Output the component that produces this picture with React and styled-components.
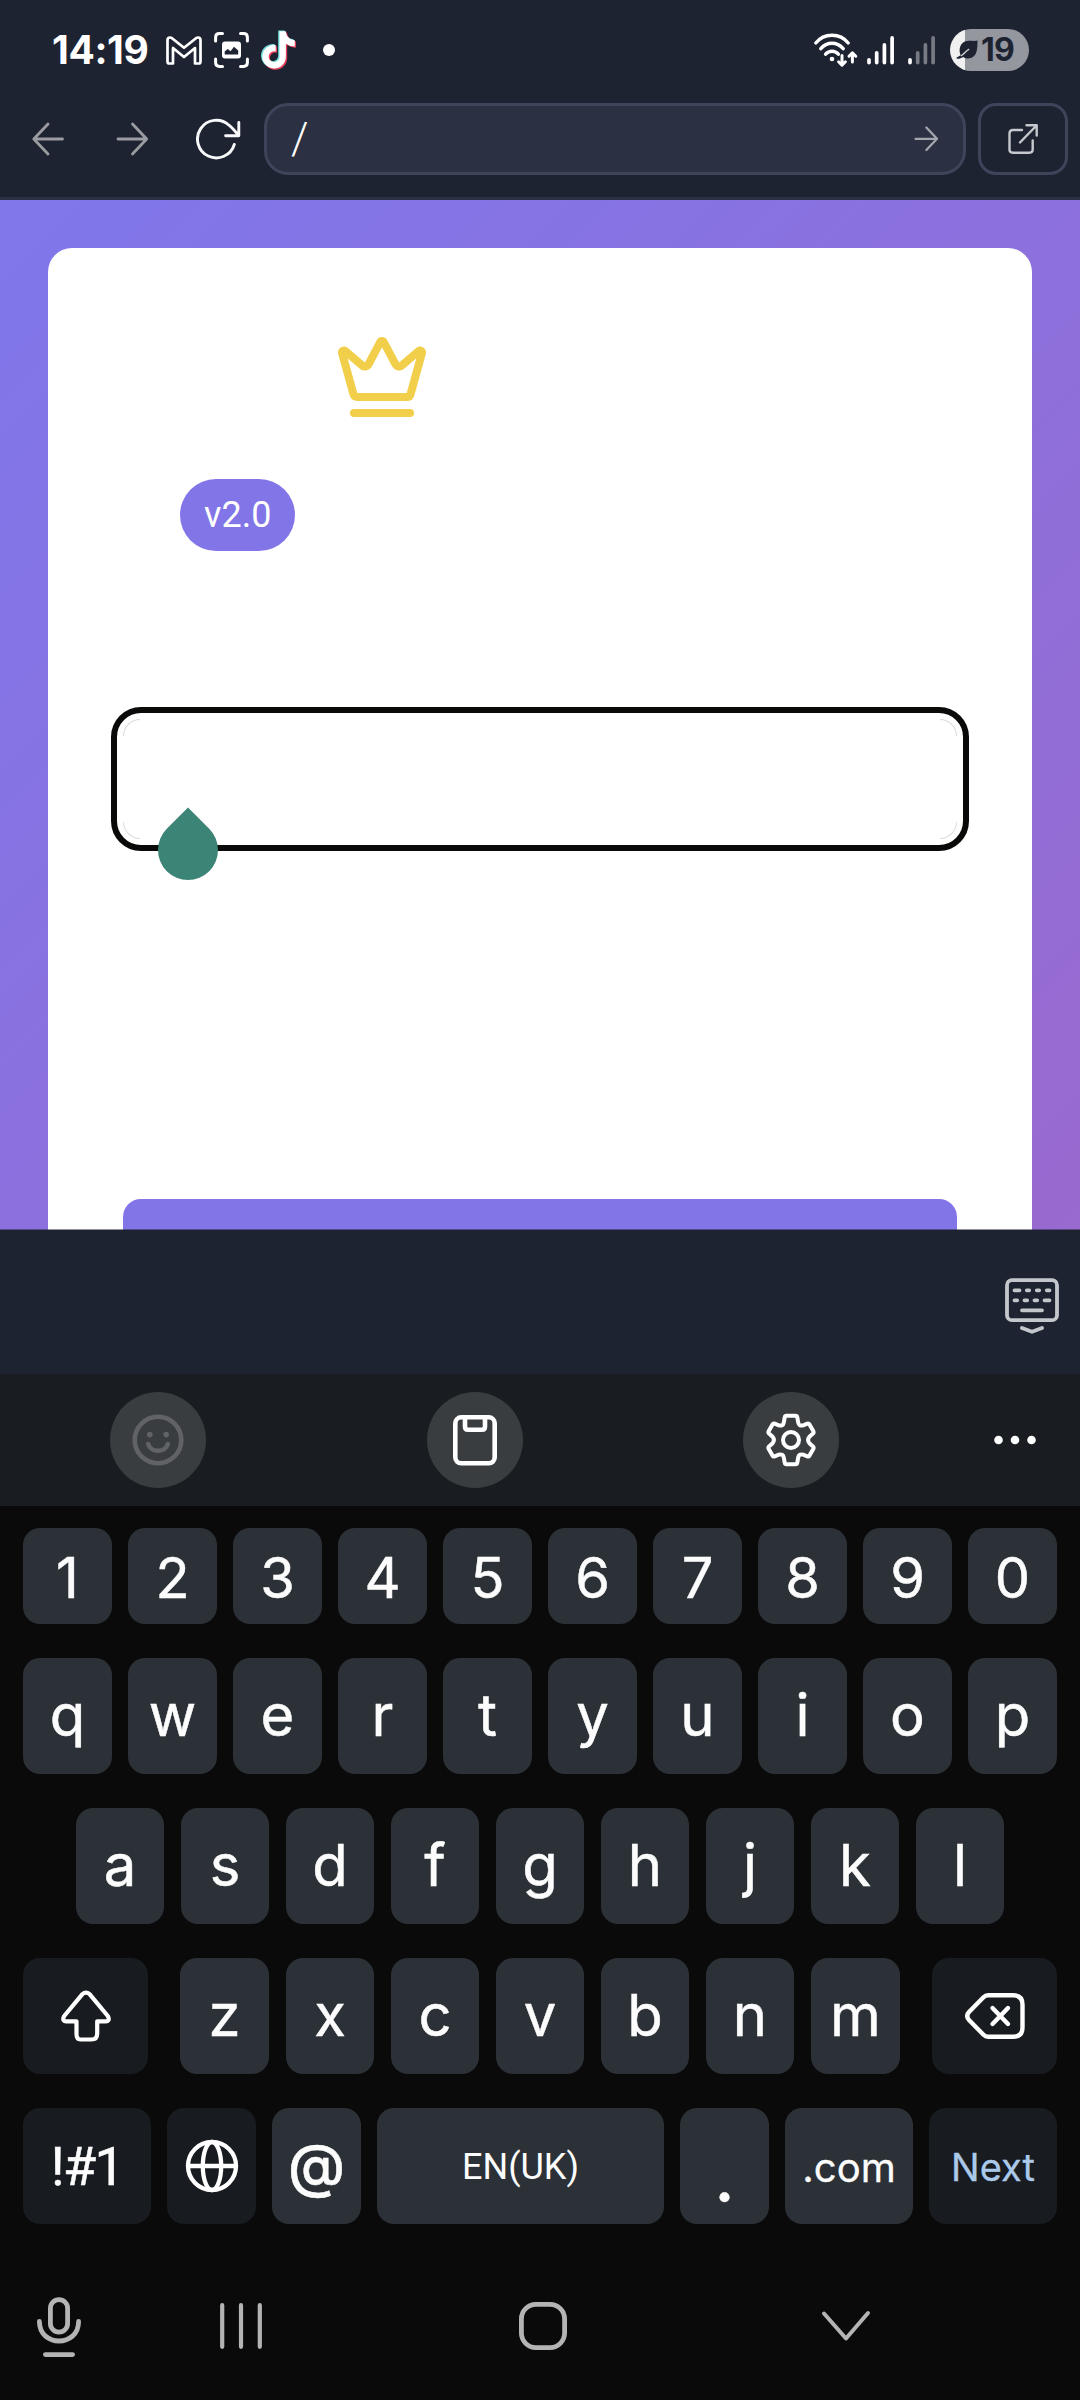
import React from "react";
import styled, { createGlobalStyle, css } from "styled-components";

const Global = createGlobalStyle`
  *, *::before, *::after { box-sizing: border-box; }
  body { margin: 0; background: #0a0a0a; }
  svg { display: block; flex: none; }
`;

const Screen = styled.div`
  width: 1080px;
  height: 2400px;
  display: flex;
  flex-direction: column;
  overflow: hidden;
  background: #0a0a0a;
  font-family: Inter, Roboto, "Liberation Sans", sans-serif;
`;

/* ---------- status bar ---------- */

const StatusBar = styled.header`
  height: 100px;
  flex: none;
  display: flex;
  align-items: center;
  justify-content: space-between;
  padding: 0 51px 0 52px;
  background: #1e2332;
`;

const StatusGroup = styled.div`
  display: flex;
  align-items: center;
  gap: ${(p) => p.$gap}px;
`;

const Clock = styled.span`
  width: 102px;
  font-size: 39px;
  font-weight: 700;
  line-height: 100px;
  letter-spacing: -0.4px;
  white-space: nowrap;
  color: #fff;
`;

const NoticeDot = styled.span`
  width: 12px;
  height: 12px;
  margin-left: 15px;
  border-radius: 50%;
  background: #fff;
`;

const Battery = styled.div`
  width: 79px;
  height: 42px;
  margin-left: 1px;
  padding-left: 6px;
  display: flex;
  align-items: center;
  gap: 3px;
  border-radius: 21px;
  background: linear-gradient(90deg, #f0f0f1 15px, #94979e 15px);
  color: #1e2332;
  font-size: 32px;
  font-weight: 700;
  letter-spacing: -0.8px;
  line-height: 42px;
`;

/* ---------- browser bar ---------- */

const BrowserBar = styled.nav`
  height: 100px;
  flex: none;
  display: flex;
  align-items: flex-start;
  padding: 3px 12px 0 32px;
  background: #1e2332;
  border-bottom: 3px solid #2b3042;
`;

const NavIcon = styled.span`
  width: ${(p) => p.$width}px;
  height: 72px;
  display: flex;
  align-items: center;
`;

const UrlField = styled.div`
  width: 702px;
  height: 72px;
  padding: 0 24px;
  display: flex;
  align-items: center;
  justify-content: space-between;
  border: 3px solid #3f445a;
  border-radius: 24px;
  background: #2b3042;
  color: #fff;
  font: 300 44px/66px Roboto, sans-serif;
`;

const OpenButton = styled.span`
  width: 90px;
  height: 72px;
  margin-left: 12px;
  display: flex;
  align-items: center;
  justify-content: center;
  border: 3px solid #3f445a;
  border-radius: 18px;
`;

/* ---------- page ---------- */

const Page = styled.main`
  height: 1030px;
  flex: none;
  padding: 48px 48px 0;
  overflow: hidden;
  background: linear-gradient(135deg, #7f77eb 0%, #9a69ce 100%);
  background-size: 1080px 1130px;
`;

const Card = styled.section`
  height: 1100px;
  display: flex;
  flex-direction: column;
  align-items: flex-start;
  padding: 81px 75px 0;
  border-radius: 24px;
  background: #fff;
`;

const CrownWrap = styled.div`
  margin-left: 211px;
`;

const Version = styled.span`
  height: 72px;
  margin: 54px 0 0 57px;
  padding: 0 24px;
  border-radius: 36px;
  background: #8175e8;
  color: #fff;
  font: 400 36px/72px Roboto, sans-serif;
`;

const Field = styled.div`
  position: relative;
  width: 834px;
  height: 120px;
  margin-top: 168px;
  display: grid;
  grid-template-columns: 17px 17px;
  grid-template-rows: 17px 17px;
  justify-content: space-between;
  align-content: space-between;
  border-radius: 18px;
  outline: 6px solid #0a0a08;
  outline-offset: 6px;
`;

const corners = {
  tl: css`border-width: 1px 0 0 1px; border-top-left-radius: 17px;`,
  tr: css`border-width: 1px 1px 0 0; border-top-right-radius: 17px;`,
  bl: css`border-width: 0 0 1px 1px; border-bottom-left-radius: 17px;`,
  br: css`border-width: 0 1px 1px 0; border-bottom-right-radius: 17px;`,
};

const Corner = styled.i`
  border: 0 solid #dcdcdc;
  ${(p) => corners[p.$at]}
`;

const CaretHandle = styled.span`
  position: absolute;
  left: 35px;
  top: 101px;
  width: 60px;
  height: 60px;
  border-radius: 0 50% 50% 50%;
  background: #3c8576;
  transform: rotate(45deg);
`;

const Submit = styled.div`
  width: 834px;
  height: 144px;
  flex: none;
  margin-top: 360px;
  border-radius: 18px;
  background: #8175e8;
`;

/* ---------- keyboard ---------- */

const HideBar = styled.div`
  position: relative;
  height: 145px;
  flex: none;
  margin-top: -1px;
  padding: 8px 21px 0 0;
  display: flex;
  align-items: center;
  justify-content: flex-end;
  border-top: 1px solid rgba(30, 35, 50, 0.5);
  background: #1e2332;
  background-clip: padding-box;
`;

const ToolBar = styled.div`
  height: 132px;
  flex: none;
  display: flex;
  align-items: center;
  padding-left: 110px;
  background: #191c20;
`;

const Tool = styled.span`
  width: 96px;
  height: 96px;
  margin-right: ${(p) => p.$after}px;
  display: flex;
  align-items: center;
  justify-content: center;
  border-radius: 50%;
  background: #3a3d40;
`;

const Keys = styled.div`
  flex: none;
  display: flex;
  flex-direction: column;
  gap: 34px;
  padding: 22px 23px 0;
`;

const KeyRow = styled.div`
  display: flex;
  gap: ${(p) => p.$gap || 16}px;
  padding: 0 ${(p) => p.$inset || 0}px;
`;

const Key = styled.span`
  width: ${(p) => p.$width || 89}px;
  height: ${(p) => p.$height || 116}px;
  flex: none;
  display: flex;
  align-items: center;
  justify-content: center;
  padding-top: ${(p) => p.$drop || 0}px;
  margin-left: ${(p) => p.$before || 0}px;
  border-radius: 17px;
  background: ${(p) => (p.$dark ? "#181b1f" : "#2c3137")};
  color: ${(p) => p.$color || "#fcfcfc"};
  font-family: ${(p) => (p.$roboto ? "Roboto" : "Inter")}, sans-serif;
  font-size: ${(p) => p.$size || 58}px;
  font-weight: ${(p) => p.$weight || 400};
  letter-spacing: ${(p) => p.$track || 0}px;
  -webkit-text-stroke: ${(p) => (p.$stroke === undefined ? 0.5 : p.$stroke)}px currentColor;
  line-height: 1.2;
  white-space: nowrap;
`;

const BottomNav = styled.footer`
  flex: 1;
  display: flex;
  align-items: flex-start;
  padding: 72px 0 0 35px;
`;

const NavSlot = styled.span`
  height: ${(p) => p.$height || 60}px;
  margin-left: ${(p) => p.$before || 0}px;
  display: flex;
  align-items: center;
`;

/* ---------- drawings ---------- */

const Draw = ({ w, h, color = "#fff", sw = 3, children }) => (
  <svg width={w} height={h} viewBox={`0 0 ${w} ${h}`} fill="none" stroke={color}
    strokeWidth={sw} strokeLinecap="round" strokeLinejoin="round">
    {children}
  </svg>
);

const MailIcon = () => (
  <Draw w={36} h={29} sw={2.7}>
    <path d="M1.5 4.2Q1.5 1.5 4 1.5Q5 1.5 6 2.2L18 11.8L30 2.2Q31 1.5 32 1.5Q34.5 1.5 34.5 4.2V25.5Q34.5 27.5 32.8 27.5H29V12L18 21L7 12V27.5H3.2Q1.5 27.5 1.5 25.5Z" />
  </Draw>
);

const CaptureIcon = () => (
  <Draw w={35} h={36} sw={3}>
    <path d="M1.6 9V5.5Q1.6 1.6 5.5 1.6H8.5M26.5 1.6H29.5Q33.4 1.6 33.4 5.5V9M33.4 27V30.5Q33.4 34.4 29.5 34.4H26.5M8.5 34.4H5.5Q1.6 34.4 1.6 30.5V27" />
    <rect x="8" y="9.5" width="19" height="17" rx="3" fill="#fff" stroke="none" />
    <path d="M10.7 22.5V19.5L13.8 17L16.5 19.3L20 14.8L24.2 18.5V22.5Z" fill="#1e2332" stroke="none" />
  </Draw>
);

const NOTE =
  "M448,209.91a210.06,210.06,0,0,1-122.77-39.25V349.38A162.55,162.55,0,1,1,185,188.31V278.2a74.62,74.62,0,1,0,52.23,71.18V0l88,0a121.18,121.18,0,0,0,1.86,22.17h0A122.18,122.18,0,0,0,381,102.39a121.43,121.43,0,0,0,67,20.14Z";

const TikTokIcon = () => (
  <svg width="35" height="40" viewBox="0 0 35 40">
    <g transform="translate(0 0.4) scale(0.0725)"><path fill="#6fdcdc" d={NOTE} /></g>
    <g transform="translate(2.6 2.6) scale(0.0725)"><path fill="#e5405a" d={NOTE} /></g>
    <g transform="translate(1.300 1.300) scale(0.0725)"><path fill="#fff" d={NOTE} /></g>
  </svg>
);

const WifiIcon = () => (
  <Draw w={45} h={36} sw={3.4}>
    <path d="M2.8 11Q9 3.2 19 3.2T35.2 11M7.8 16.6Q12.5 11.2 19 11.2T30.2 16.6M12.6 22.2Q15.2 19.2 19 19.2T25.4 22.2" />
    <circle cx="19" cy="27" r="2.3" fill="#fff" stroke="none" />
    <path d="M29 23.5V32.5M25.6 29.8L29 33.2L32.4 29.8M39.4 30V21.5M36 24.2L39.4 20.8L42.8 24.2" strokeWidth="3" />
  </Draw>
);

const SignalIcon = ({ level }) => (
  <Draw w={32} h={30} sw={3.7}>
    {[23.9, 17, 9, 2].map((y, i) => (
      <path key={i} d={`M${2 + i * 7.7} ${y + 0.9}V27.6`} opacity={i < level ? 1 : 0.4} />
    ))}
  </Draw>
);

const LeafIcon = () => (
  <svg width="22" height="20" viewBox="0 0 22 20">
    <path fill="#1e2332" d="M21.5 0.6C21.5 9 21.5 18.4 11.5 18.4C9.500 18.400 8.200 17.900 7.200 17C4.900 18.300 2.600 19.200 0.800 18.600C0 17.800 0.600 17.200 1.600 16.900C3 16.500 3.900 15.900 4.700 15.100C2.700 11 2.900 1.200 13 0.800C16 0.700 19 1.200 21.500 0.600Z" />
    <path d="M4.700 16C8 14.500 9.500 11 13.200 9.200" fill="none" stroke="#d5d6d9" strokeWidth="1.300" />
  </svg>
);

const BackIcon = () => (
  <Draw w={33} h={34} color="#9a9ca1" sw={2.8}>
    <path d="M30.500 17H2M16 2L1.800 17L16 32" />
  </Draw>
);

const ForwardIcon = ({ scale = 1, color = "#9a9ca1", sw = 2.8 }) => (
  <svg width={33 * scale} height={34 * scale} viewBox="0 0 33 34" fill="none" stroke={color}
    strokeWidth={sw} strokeLinecap="round" strokeLinejoin="round">
    <path d="M2 17H30.500M16.500 2L30.700 17L16.500 32" />
  </svg>
);

const ReloadIcon = () => (
  <Draw w={46} h={44} sw={2.9} color="#f8f9fa">
    <path d="M38.300 27.500A18.800 18.800 0 1 1 33 8.200C36 10.600 39 14 42.500 18.500M42.800 5.500V18.700H29.600" />
  </Draw>
);

const ExternalIcon = () => (
  <Draw w={30} h={30} color="#c5c8cc" sw={2.4}>
    <path d="M14 6H5Q1.500 6 1.500 9.500V25.500Q1.500 28.700 4.700 28.700H21.500Q24.700 28.700 24.700 25.500V16.500M12 18.500L28.500 1.500M18.500 1.300H28.700V11.500" />
  </Draw>
);

const CrownIcon = () => (
  <svg width="96" height="96" viewBox="0 0 24 24" fill="none" stroke="#f2cf4a" strokeWidth="2"
    strokeLinecap="round" strokeLinejoin="round">
    <path d="M11.562 3.266a.5.5 0 0 1 .876 0L15.39 8.87a1 1 0 0 0 1.516.294L21.183 5.5a.5.5 0 0 1 .798.519l-2.834 10.246a1 1 0 0 1-.956.734H5.81a1 1 0 0 1-.957-.734L2.02 6.02a.5.5 0 0 1 .798-.519l4.276 3.664a1 1 0 0 0 1.516-.294z" />
    <path d="M5 21h14" />
  </svg>
);

const HideIcon = () => (
  <Draw w={54} h={56} color="#c3c7cc" sw={3.8}>
    <rect x="2" y="2.200" width="50" height="40" rx="5" />
    <path d="M9.500 12.300H14.500M21.800 12.300H24.200M31.800 12.300H34.200M41.800 12.300H44.500M9.500 22.300H12.200M19.500 22.300H22.200M29.500 22.300H32.200M39.500 22.300H44.500M17 32.300H37M17 50L27 53.800L37 50" />
  </Draw>
);

const SmileIcon = () => (
  <Draw w={52} h={52} color="#606266" sw={4.600}>
    <circle cx="26" cy="26" r="23.300" />
    <path d="M16.200 30C18.500 39 33.500 39 35.800 30" />
    <circle cx="17.800" cy="20.600" r="2.800" fill="#606266" stroke="none" />
    <circle cx="34.200" cy="20.600" r="2.800" fill="#606266" stroke="none" />
  </Draw>
);

const ClipboardIcon = () => (
  <Draw w={44} h={52} sw={4.600}>
    <rect x="2.300" y="3.300" width="39.400" height="46" rx="6" />
    <path d="M12 4V12.500Q12 15.800 15 15.800H29Q32 15.800 32 12.500V4" />
  </Draw>
);

const GearIcon = () => (
  <Draw w={50} h={54} sw={4}>
    <path d="M20.500 2.800H29.500Q31 2.800 31.300 4.400L32.200 9.500Q33 13.600 37.200 12.300L41.300 10.600Q42.700 10.100 43.500 11.400L47.400 18.300Q48 19.500 47 20.500L43.400 23.800Q40.800 27 43.400 30.200L47 33.500Q48 34.500 47.400 35.700L43.500 42.600Q42.700 43.900 41.300 43.400L37.200 41.700Q33 40.400 32.200 44.500L31.300 49.600Q31 51.200 29.500 51.200H20.500Q19 51.200 18.700 49.600L17.800 44.500Q17 40.400 12.800 41.700L8.700 43.400Q7.300 43.900 6.500 42.600L2.600 35.700Q2 34.500 3 33.500L6.600 30.200Q9.200 27 6.600 23.800L3 20.500Q2 19.500 2.600 18.300L6.500 11.400Q7.300 10.100 8.700 10.600L12.800 12.300Q17 13.600 17.800 9.500L18.700 4.400Q19 2.800 20.500 2.800Z" />
    <circle cx="25" cy="27" r="8" />
  </Draw>
);

const MoreIcon = () => (
  <svg width="42" height="10" viewBox="0 0 42 10" fill="#fff">
    <circle cx="4.500" cy="5" r="4.300" />
    <circle cx="21" cy="5" r="4.300" />
    <circle cx="37.500" cy="5" r="4.300" />
  </svg>
);

const ShiftIcon = () => (
  <Draw w={50} h={52} sw={4.200}>
    <path d="M21.200 4.300Q25 0.900 28.800 4.300L46.800 26Q49.500 31 44.500 31.300H36.200V43.500Q36.200 49.500 30.500 49.500H19.500Q15.500 49.500 15.500 44V31.300H5.500Q0.500 31 3.200 26Z" />
  </Draw>
);

const BackspaceIcon = () => (
  <Draw w={60} h={46} sw={4.400}>
    <path d="M23 2.300H48Q57.500 2.300 57.500 11.500V34.500Q57.500 43.700 48 43.700H23Q20.500 43.700 18.500 41.700L4 27Q0.500 23 4 19L18.500 4.300Q20.500 2.300 23 2.300Z" />
    <path d="M27.500 15L43 31M43 15L27.500 31" />
  </Draw>
);

const GlobeIcon = () => (
  <Draw w={54} h={54} sw={4.300}>
    <circle cx="27" cy="27" r="24" />
    <ellipse cx="27" cy="27" rx="9.200" ry="24" />
    <path d="M3 27H51" />
  </Draw>
);

const MicIcon = () => (
  <Draw w={48} h={64} color="#b4b4b4" sw={4.800}>
    <rect x="15.400" y="4.600" width="17.200" height="32.500" rx="8.600" />
    <path d="M4.400 26.500C4.400 52.500 43.600 52.500 43.600 26.500M10.400 59.600H37.600" />
  </Draw>
);

const RecentsIcon = () => (
  <Draw w={42} h={46} color="#b4b4b4" sw={4.200}>
    <path d="M2.200 2.200V43.800M21 2.200V43.800M39.800 2.200V43.800" />
  </Draw>
);

const HomeIcon = () => (
  <Draw w={48} h={48} color="#b4b4b4" sw={4.800}>
    <rect x="2.400" y="2.400" width="43.200" height="43.200" rx="14.500" />
  </Draw>
);

const DownIcon = () => (
  <Draw w={50} h={32} color="#b4b4b4" sw={4}>
    <path d="M3 3.500L25 28.500L47 3" />
  </Draw>
);

/* ---------- app ---------- */

export default function App() {
  return (
    <Screen>
      <Global />
      <StatusBar>
        <StatusGroup $gap={12}>
          <Clock>14:19</Clock>
          <MailIcon />
          <CaptureIcon />
          <TikTokIcon />
          <NoticeDot />
        </StatusGroup>
        <StatusGroup $gap={9}>
          <WifiIcon />
          <SignalIcon level={4} />
          <SignalIcon level={1} />
          <Battery>
            <LeafIcon />
            19
          </Battery>
        </StatusGroup>
      </StatusBar>

      <BrowserBar>
        <NavIcon $width={84}><BackIcon /></NavIcon>
        <NavIcon $width={80}><ForwardIcon /></NavIcon>
        <NavIcon $width={68}><ReloadIcon /></NavIcon>
        <UrlField>
          /
          <ForwardIcon scale={0.75} color="#a3a6ac" sw={3} />
        </UrlField>
        <OpenButton><ExternalIcon /></OpenButton>
      </BrowserBar>

      <Page>
        <Card>
          <CrownWrap><CrownIcon /></CrownWrap>
          <Version>v2.0</Version>
          <Field>
            <Corner $at="tl" />
            <Corner $at="tr" />
            <Corner $at="bl" />
            <Corner $at="br" />
            <CaretHandle />
          </Field>
          <Submit />
        </Card>
      </Page>

      <HideBar><HideIcon /></HideBar>
      <ToolBar>
        <Tool $after={221}><SmileIcon /></Tool>
        <Tool $after={220}><ClipboardIcon /></Tool>
        <Tool $after={155}><GearIcon /></Tool>
        <MoreIcon />
      </ToolBar>

      <Keys>
        <KeyRow>
          {[..."1234567890"].map((k) => (
            <Key key={k} $height={96} $size={56} $drop={5}>{k}</Key>
          ))}
        </KeyRow>
        <KeyRow>
          {[..."qwertyuiop"].map((k) => <Key key={k}>{k}</Key>)}
        </KeyRow>
        <KeyRow $gap={17} $inset={53}>
          {[..."asdfghjkl"].map((k) => <Key key={k} $width={88}>{k}</Key>)}
        </KeyRow>
        <KeyRow $gap={17}>
          <Key $dark $width={125}><ShiftIcon /></Key>
          {[..."zxcvbnm"].map((k) => (
            <Key key={k} $width={k === "z" || k === "m" ? 89 : 88} $before={k === "z" ? 15 : 0}>{k}</Key>
          ))}
          <Key $dark $width={125} $before={15}><BackspaceIcon /></Key>
        </KeyRow>
        <KeyRow>
          <Key $dark $roboto $width={128} $size={54} $drop={3} $track={-1.6}>!#1</Key>
          <Key $dark><GlobeIcon /></Key>
          <Key $size={58} $weight={500}>@</Key>
          <Key $roboto $width={287} $size={36} $drop={3} $stroke={0}>EN(UK)</Key>
          <Key $size={66} $drop={26} $weight={500}>.</Key>
          <Key $width={128} $size={40} $drop={3} $stroke={0.3}>.com</Key>
          <Key $dark $width={128} $size={38} $drop={3} $stroke={0.3} $color="#abc9e9">Next</Key>
        </KeyRow>
      </Keys>

      <BottomNav>
        <NavSlot $height={62}><MicIcon /></NavSlot>
        <NavSlot $before={137}><RecentsIcon /></NavSlot>
        <NavSlot $before={257}><HomeIcon /></NavSlot>
        <NavSlot $before={254}><DownIcon /></NavSlot>
      </BottomNav>
    </Screen>
  );
}
